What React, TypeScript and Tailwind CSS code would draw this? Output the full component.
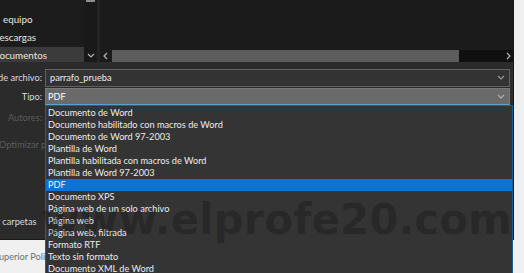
import { ReactNode } from "react";

const fileTypes = [
  "Documento de Word",
  "Documento habilitado con macros de Word",
  "Documento de Word 97-2003",
  "Plantilla de Word",
  "Plantilla habilitada con macros de Word",
  "Plantilla de Word 97-2003",
  "PDF",
  "Documento XPS",
  "Página web de un solo archivo",
  "Página web",
  "Página web, filtrada",
  "Formato RTF",
  "Texto sin formato",
  "Documento XML de Word",
  "Documento XML de Word 2003",
];

function Chevron({ dir = "down", className = "" }: { dir?: "down" | "left" | "right"; className?: string }) {
  const d = dir === "down" ? "M1 2l3 3 3-3" : dir === "left" ? "M5 1L2 4l3 3" : "M3 1l3 3-3 3";
  return (
    <svg width="8" height="8" viewBox="0 0 8 8" className={className}>
      <path d={d} fill="none" stroke="currentColor" strokeWidth="1.2" />
    </svg>
  );
}

function Label({ children, dim }: { children: ReactNode; dim?: boolean }) {
  return (
    <div className="w-[45px] flex justify-end overflow-hidden whitespace-nowrap pr-[3px]">
      <span className={dim ? "text-[#5c5c5c]" : "text-[#dcdcdc]"}>{children}</span>
    </div>
  );
}

export default function App() {
  return (
    <div className="relative w-[524px] h-[273px] overflow-hidden bg-[#f0f0f0] font-['Lato',sans-serif] text-[9.2px] leading-none">
      {/* Dialog */}
      <div className="w-[514px] h-[240px] bg-[#2b2b2b] border-r border-b border-[#181818] flex flex-col">
        {/* Browser area */}
        <div className="flex h-[62px]">
          <nav className="w-[97px] flex bg-[#1c1c1c]">
            <div className="w-[84px] flex flex-col justify-end overflow-hidden text-[9.8px] text-[#e6e6e6] whitespace-nowrap">
              <div className="h-[18px] flex items-center ml-[-18px]">
                <span className="text-[#1c1c1c]">Este</span>&nbsp;equipo
              </div>
              <div className="h-[18px] flex items-center ml-[-8px]">Descargas</div>
              <div className="h-[15px] flex items-center ml-[-8px] bg-[#3b3b3b] pt-[3px]">Documentos</div>
            </div>
            <div className="w-[13px] flex flex-col justify-between bg-[#191919]">
              <div className="h-[2px] mx-[2px] bg-[#8e8e8e]" />
              <div className="h-[12px] flex items-center justify-center text-[#b5b5b5]">
                <Chevron />
              </div>
            </div>
          </nav>
          <div className="w-[3px] bg-[#242424]" />
          <div className="flex-1 flex flex-col bg-[#1b1b1b]">
            <div className="flex-1" />
            <div className="h-[12px] flex">
              <div className="w-[12px] flex items-center justify-center text-[#b5b5b5]">
                <Chevron dir="left" />
              </div>
              <div className="w-[347px] bg-[#5c5c5c]" />
              <div className="flex-1 bg-[#101010]" />
              <div className="w-[10px] bg-[#101010] flex items-center justify-center text-[#b5b5b5]">
                <Chevron dir="right" />
              </div>
            </div>
          </div>
        </div>

        {/* Form */}
        <div className="flex-1 flex flex-col pt-[7px]">
          <div className="flex items-center h-[18px]">
            <Label>Nombre de archivo:</Label>
            <div className="flex-1 mr-[3px] h-full flex items-center justify-between border border-[#626262] bg-[#333333] px-[4px] text-[#ececec]">
              <span>parrafo_prueba</span>
              <Chevron className="text-[#9a9a9a]" />
            </div>
          </div>
          <div className="flex items-center h-[17px] mt-[1px]">
            <Label>Tipo:</Label>
            <div className="flex-1 mr-[3px] h-full flex items-center justify-between border border-[#7a7a7a] border-b-[#58a3d6] bg-[#6a6a6a] px-[2px] text-white">
              <span>PDF</span>
              <Chevron className="text-[#b0b0b0] mr-[2px]" />
            </div>
          </div>
          <div className="flex items-center h-[14px] mt-[6px]">
            <Label dim>Autores:</Label>
          </div>
          <div className="flex items-center h-[14px] mt-[13px] text-[#5c5c5c] whitespace-nowrap ml-[-1px]">
            Optimizar para:
          </div>
          <div className="mt-auto h-[34px] flex items-center whitespace-nowrap text-[#dcdcdc] ml-[-30px]">
            Ocultar carpetas
          </div>
        </div>
      </div>

      {/* Document behind */}
      <div className="h-[33px] flex items-center text-[#6e6e6e] whitespace-nowrap ml-[-6px]">
        Superior Politécnica
      </div>

      {/* Open combo list */}
      <div className="absolute left-[45px] top-[105px] w-[468px] h-[180px] bg-[#343434] border-x border-t border-[#1b5e99] pt-[1px]">
        {fileTypes.map((t) => (
          <div
            key={t}
            className={`h-[12px] flex items-center pl-[2px] whitespace-nowrap ${
              t === "PDF" ? "bg-[#0a74d4] text-[#eaf4ff]" : "text-[#ececec]"
            }`}
          >
            {t}
          </div>
        ))}
      </div>

      {/* Watermark */}
      <div className="absolute left-[41px] top-[199px] whitespace-nowrap font-['DejaVu_Sans',sans-serif] font-bold text-[42px] leading-none text-[rgba(0,0,0,0.22)] pointer-events-none">
        www.elprofe20.com
      </div>
    </div>
  );
}
